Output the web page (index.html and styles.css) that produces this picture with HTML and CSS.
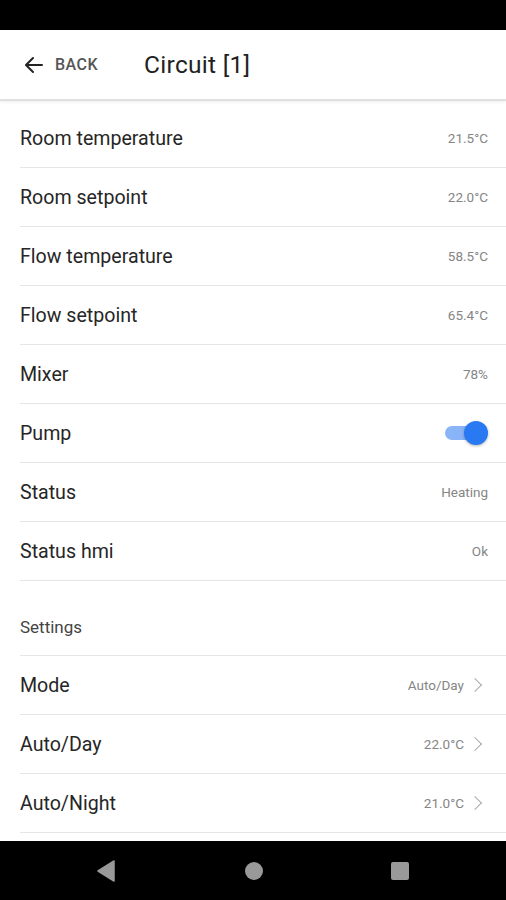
FILE: index.html
```html
<!DOCTYPE html>
<html>
<head>
  <title>Circuit [1]</title>
  <link rel="stylesheet" href="styles.css">
</head>
<body>
  <div class="phone">
    <div class="status-bar"></div>

    <div class="app-bar">
      <div class="back">
        <svg class="back-arrow" width="24" height="24" viewBox="0 0 24 24">
          <path d="M20 12H4.5M11 5l-7 7 7 7" fill="none" stroke="#222" stroke-width="2" stroke-linecap="round" stroke-linejoin="round"/>
        </svg>
        <span class="back-label">BACK</span>
      </div>
      <h1 class="title">Circuit [1]</h1>
    </div>

    <div class="content">
      <div class="list">
        <div class="row"><span class="label">Room temperature</span><span class="value">21.5°C</span></div>
        <div class="row"><span class="label">Room setpoint</span><span class="value">22.0°C</span></div>
        <div class="row"><span class="label">Flow temperature</span><span class="value">58.5°C</span></div>
        <div class="row"><span class="label">Flow setpoint</span><span class="value">65.4°C</span></div>
        <div class="row"><span class="label">Mixer</span><span class="value">78%</span></div>
        <div class="row">
          <span class="label">Pump</span>
          <span class="switch on"><span class="track"></span><span class="knob"></span></span>
        </div>
        <div class="row"><span class="label">Status</span><span class="value">Heating</span></div>
        <div class="row"><span class="label">Status hmi</span><span class="value">Ok</span></div>

        <div class="section">Settings</div>

        <div class="row link"><span class="label">Mode</span><span class="value">Auto/Day</span><span class="chevron"></span></div>
        <div class="row link"><span class="label">Auto/Day</span><span class="value">22.0°C</span><span class="chevron"></span></div>
        <div class="row link"><span class="label">Auto/Night</span><span class="value">21.0°C</span><span class="chevron"></span></div>
        <div class="row link"></div>
      </div>
    </div>

    <div class="nav-bar">
      <svg width="20" height="22" viewBox="0 0 20 22"><path d="M18 1v20L2 11z" fill="#999" stroke="#999" stroke-width="1.5" stroke-linejoin="round"/></svg>
      <span class="nav-home"></span>
      <span class="nav-recent"></span>
    </div>
  </div>
</body>
</html>
```

FILE: styles.css
```css
html, body {
  margin: 0;
  padding: 0;
  background: #fff;
}
.phone {
  width: 506px;
  height: 900px;
  display: flex;
  flex-direction: column;
  overflow: hidden;
  font-family: Roboto, "Noto Sans", sans-serif;
}
.status-bar {
  height: 30px;
  background: #000;
  flex: none;
}
.app-bar {
  height: 69px;
  flex: none;
  display: flex;
  align-items: center;
  background: #fff;
  border-bottom: 2px solid #e0e0e0;
  box-shadow: 0 1px 3px rgba(0,0,0,0.08);
  position: relative;
  z-index: 1;
}
.back {
  display: flex;
  align-items: center;
  padding-left: 22px;
  width: 122px;
}
.back-arrow {
  display: block;
}
.back-label {
  margin-left: 9px;
  font-size: 16px;
  font-weight: 500;
  letter-spacing: 0.5px;
  color: #555;
}
.title {
  margin: 0;
  font-size: 24.5px;
  font-weight: 400;
  color: #222;
  letter-spacing: 0.3px;
}
.content {
  flex: 1;
  overflow: hidden;
}
.list {
  padding-top: 8px;
}
.row {
  height: 59px;
  box-sizing: border-box;
  margin-left: 20px;
  border-bottom: 1px solid #e6e6e6;
  display: flex;
  align-items: center;
  padding-right: 18px;
}
.label {
  flex: 1;
  font-size: 19.6px;
  color: #262626;
}
.value {
  font-size: 13.5px;
  color: #858585;
}
.link {
  padding-right: 26px;
}
.chevron {
  width: 9px;
  height: 9px;
  border-top: 1.5px solid #aaa;
  border-right: 1.5px solid #aaa;
  transform: rotate(45deg);
  margin-left: 6px;
}
.section {
  height: 75px;
  box-sizing: border-box;
  margin-left: 20px;
  border-bottom: 1px solid #e6e6e6;
  display: flex;
  align-items: flex-end;
  padding-bottom: 18px;
  font-size: 17px;
  color: #444;
}
.switch {
  position: relative;
  width: 44px;
  height: 26px;
  display: block;
}
.track {
  position: absolute;
  left: 1px;
  top: 6px;
  width: 36px;
  height: 14px;
  border-radius: 7px;
  background: #8ab4f8;
}
.knob {
  position: absolute;
  right: 0;
  top: 1px;
  width: 24px;
  height: 24px;
  border-radius: 50%;
  background: #2979f2;
  box-shadow: 0 1px 3px rgba(0,0,0,0.3);
}
.nav-bar {
  height: 59px;
  flex: none;
  background: #000;
  display: flex;
  align-items: center;
  justify-content: space-between;
  padding: 0 97px 0 96px;
}
.nav-home {
  width: 18px;
  height: 18px;
  border-radius: 50%;
  background: #999;
}
.nav-recent {
  width: 18px;
  height: 18px;
  border-radius: 2px;
  background: #999;
}
```
